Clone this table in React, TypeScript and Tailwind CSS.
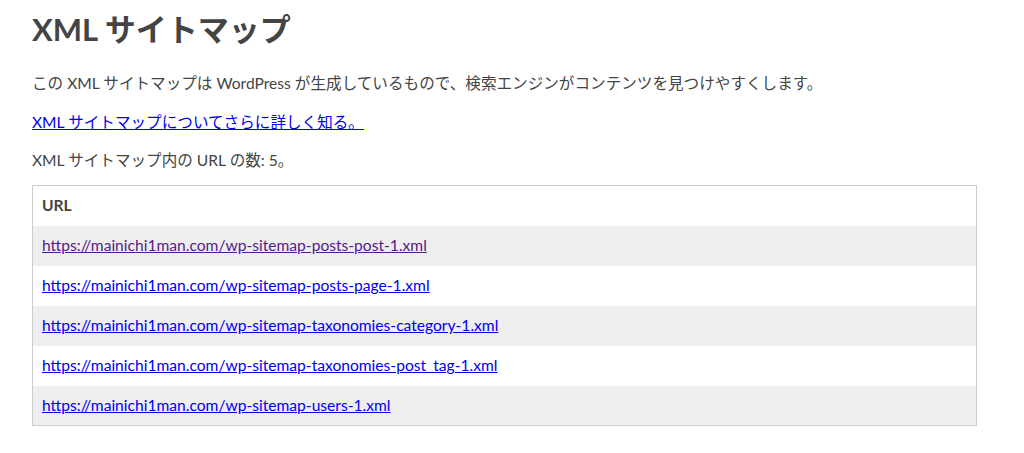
const urls = [
  "https://mainichi1man.com/wp-sitemap-posts-post-1.xml",
  "https://mainichi1man.com/wp-sitemap-posts-page-1.xml",
  "https://mainichi1man.com/wp-sitemap-taxonomies-category-1.xml",
  "https://mainichi1man.com/wp-sitemap-taxonomies-post_tag-1.xml",
  "https://mainichi1man.com/wp-sitemap-users-1.xml",
];

export default function App() {
  return (
    <div className="min-h-screen bg-white font-['Lato','Noto_Sans_CJK_JP',sans-serif] text-[#444]">
      <div className="ml-[32px] w-[945px]">
        <h1 className="pt-[10px] text-[31px] leading-[38px] font-bold">XML サイトマップ</h1>
        <p className="mt-[24px] text-[15.6px] leading-[22px]">
          この XML サイトマップは WordPress が生成しているもので、検索エンジンがコンテンツを見つけやすくします。
        </p>
        <p className="mt-[17px] text-[15.6px] leading-[22px]">
          <a href="#" className="text-[#0000ee] underline">
            XML サイトマップについてさらに詳しく知る。
          </a>
        </p>
        <p className="mt-[16px] text-[15.6px] leading-[22px]">XML サイトマップ内の URL の数: 5。</p>
        <table className="mt-[14px] w-full border border-[#ccc] border-collapse text-[15.6px]">
          <thead>
            <tr>
              <th className="h-[40px] px-[9px] text-left font-bold">URL</th>
            </tr>
          </thead>
          <tbody>
            {urls.map((u, i) => (
              <tr key={u}>
                <td className={`h-[40px] px-[9px] ${i % 2 === 0 ? "bg-[#eee]" : "bg-white"}`}>
                  <a href="#" className={`underline ${i === 0 ? "text-[#551a8b]" : "text-[#0000ee]"}`}>
                    {u}
                  </a>
                </td>
              </tr>
            ))}
          </tbody>
        </table>
      </div>
    </div>
  );
}
